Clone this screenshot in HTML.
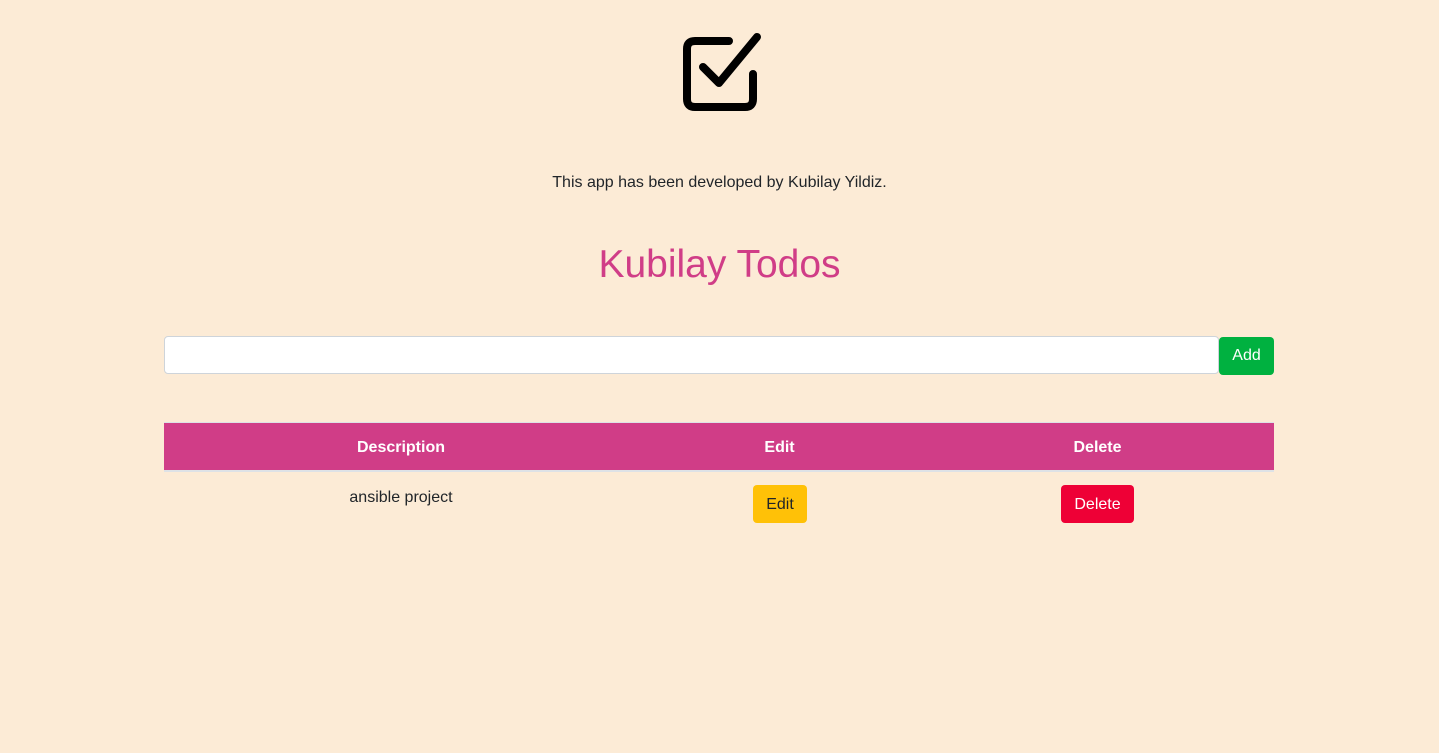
<!DOCTYPE html>
<html><head><style>
html,body{margin:0;padding:0;width:1439px;height:753px;overflow:hidden;background:#fcebd6;font-family:"Liberation Sans",Arial,sans-serif;color:#212529}
.a{position:absolute}
.c{text-align:center}
</style></head><body>
<svg class="a" style="left:0;top:0" width="1439" height="140">
<path d="M729 41 H695 Q687 41 687 49 V99 Q687 107 695 107 H745 Q753 107 753 99 V74" fill="none" stroke="#000" stroke-width="8" stroke-linecap="round" stroke-linejoin="round"/>
<path d="M703 67 L719 83 L757 37" fill="none" stroke="#000" stroke-width="8" stroke-linecap="round" stroke-linejoin="round"/>
</svg>
<div class="a c" style="left:0;width:1439px;top:173px;font-size:16px;line-height:20px">This app has been developed by Kubilay Yildiz.</div>
<div class="a c" style="left:0;width:1439px;top:241px;font-size:39px;line-height:48px;color:#d03d87">Kubilay Todos</div>
<div class="a" style="left:164px;top:336px;width:1053px;height:36px;background:#fff;border:1px solid #ced4da;border-radius:4px"></div>
<div class="a c" style="left:1219px;top:337px;width:55px;height:38px;background:#00b140;border-radius:4px;color:#fff;font-size:16px;line-height:38px">Add</div>
<div class="a" style="left:164px;top:422px;width:1110px;height:50px;background:#d03d87;border-top:1px solid #dee2e6;border-bottom:2px solid #dee2e6;box-sizing:border-box"></div>
<div class="a c" style="left:164px;width:474px;top:438px;font-size:16px;font-weight:bold;color:#fff;line-height:20px">Description</div>
<div class="a c" style="left:638px;width:283px;top:438px;font-size:16px;font-weight:bold;color:#fff;line-height:20px">Edit</div>
<div class="a c" style="left:921px;width:353px;top:438px;font-size:16px;font-weight:bold;color:#fff;line-height:20px">Delete</div>
<div class="a c" style="left:164px;width:474px;top:488px;font-size:16px;line-height:20px">ansible project</div>
<div class="a c" style="left:753px;top:485px;width:54px;height:38px;background:#ffc107;border-radius:4px;font-size:16px;line-height:40px">Edit</div>
<div class="a c" style="left:1061px;top:485px;width:73px;height:38px;background:#ee0036;border-radius:4px;color:#fff;font-size:16px;line-height:40px">Delete</div>
</body></html>
